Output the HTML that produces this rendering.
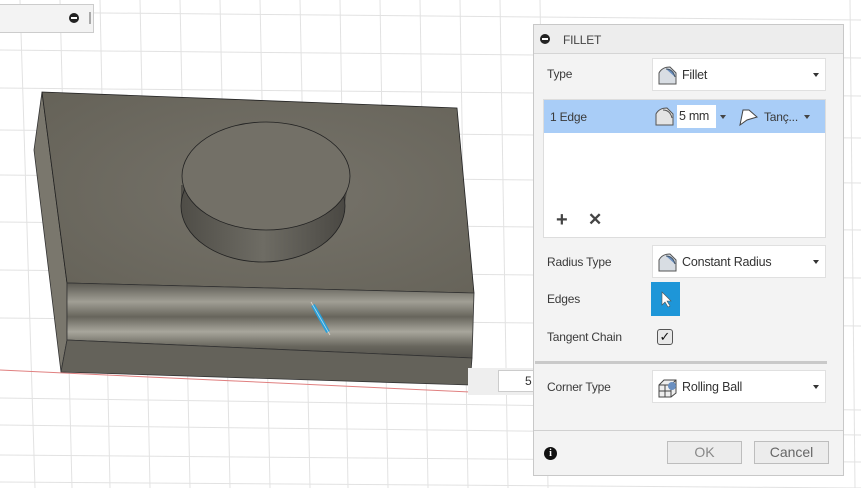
<!DOCTYPE html>
<html><head><meta charset="utf-8"><style>
*{margin:0;padding:0;box-sizing:border-box}
body{width:861px;height:488px;overflow:hidden;background:#fff;font-family:"Liberation Sans",sans-serif;font-size:12px;color:#333;position:relative}
.abs{position:absolute}
.dlg{left:533px;top:24px;width:311px;height:452px;background:#f3f3f3;border:1px solid #c8c8c8}
.lbl{position:absolute;font-size:12px;color:#3a3a3a;letter-spacing:-0.2px}
.dd{position:absolute;background:#fff;border:1px solid #e0e0e0;height:33px;left:118px;width:174px}
.dd .t{position:absolute;left:29px;top:9px;font-size:12.5px;color:#333;letter-spacing:-0.2px}
.dd .ar{position:absolute;right:6px;top:14px;width:0;height:0;border-left:3px solid transparent;border-right:3px solid transparent;border-top:4px solid #333}
.dd svg{position:absolute;left:3px;top:6px}
.btn{position:absolute;border:1px solid #bdbdbd;background:#ececec;height:23px;top:416px;text-align:center;line-height:21px;font-size:14px;color:#888}
</style></head><body>
<svg class="abs" style="left:0;top:0" width="861" height="488">
<g stroke="#e2e2e2" stroke-width="1" fill="none">
<path d="M0 12 L861 20"/><path d="M0 50 L861 58"/><path d="M0 88 L861 96"/><path d="M0 130 L861 138"/><path d="M0 175 L861 183"/><path d="M0 222 L861 230"/><path d="M0 270 L861 278"/><path d="M0 318 L861 326"/><path d="M0 398 L861 410"/><path d="M0 425 L861 435"/><path d="M0 455 L861 462"/><path d="M0 482 L861 488"/>
<path d="M20 0 L35 488"/><path d="M60 0 L72 488"/><path d="M100 0 L110 488"/><path d="M140 0 L150 488"/><path d="M180 0 L190 488"/><path d="M220 0 L230 488"/><path d="M260 0 L270 488"/><path d="M300 0 L310 488"/><path d="M340 0 L348 488"/><path d="M380 0 L388 488"/><path d="M420 0 L428 488"/><path d="M460 0 L468 488"/><path d="M500 0 L508 488"/><path d="M540 0 L548 488"/><path d="M850 0 L855 488"/>
</g>
<path d="M0 370 L470 392" stroke="#e08080" stroke-width="1"/>
<defs>
<radialGradient id="tf" cx="0.55" cy="0.5" r="0.7"><stop offset="0" stop-color="#76736a"/><stop offset="1" stop-color="#666359"/></radialGradient>
<linearGradient id="fl" x1="0" y1="0" x2="0" y2="1"><stop offset="0" stop-color="#5a5851"/><stop offset="0.25" stop-color="#a19f95"/><stop offset="0.45" stop-color="#67655c"/><stop offset="0.65" stop-color="#a8a69c"/><stop offset="0.85" stop-color="#67655c"/><stop offset="1" stop-color="#55534d"/></linearGradient>
<linearGradient id="cy" x1="0" y1="0" x2="1" y2="0"><stop offset="0" stop-color="#4f4d47"/><stop offset="0.5" stop-color="#6e6c64"/><stop offset="1" stop-color="#4a4843"/></linearGradient>
</defs>
<polygon points="42,92 34,150 61,372 67,340 67,283" fill="#7a776d" stroke="#333" stroke-width="0.8"/>
<polygon points="42,92 457,108 474,293 67,283" fill="url(#tf)" stroke="#222" stroke-width="0.8"/>
<polygon points="67,283 474,293 472,358 67,340" fill="url(#fl)" stroke="#333" stroke-width="0.8"/>
<polygon points="67,340 472,358 470,385 61,372" fill="#64625a" stroke="#333" stroke-width="0.8"/>
<path d="M181 185 L181 205 A82 57 0 0 0 343 215 L348 185 Z" fill="url(#cy)"/>
<ellipse cx="263" cy="206" rx="82" ry="56" fill="url(#cy)" stroke="#222" stroke-width="0.8"/>
<ellipse cx="266" cy="176" rx="84" ry="54" fill="#737067" stroke="#222" stroke-width="0.8"/>
<path d="M313 305 L328 332" stroke="#2a9fd8" stroke-width="4"/>
<path d="M311 302 L330 335" stroke="#fff" stroke-width="0.8" fill="none" opacity="0.6"/>
</svg>
<div class="abs" style="left:0;top:4px;width:94px;height:29px;background:#f3f3f3;border:1px solid #ccc;border-left:none"></div>
<div class="abs" style="left:69px;top:13px;width:10px;height:10px;border-radius:50%;background:#222"><div style="position:absolute;left:2px;top:4px;width:6px;height:2px;background:#fff"></div></div>
<div class="abs" style="left:89px;top:12px;width:2px;height:12px;background:#aaa"></div>
<div class="abs" style="left:468px;top:368px;width:66px;height:27px;background:#eee"></div>
<div class="abs" style="left:498px;top:370px;width:36px;height:22px;background:#fff;border:1px solid #ccc;font-size:12px;padding:3px 0 0 26px">5</div>
<div class="abs dlg">
 <div class="abs" style="left:0;top:0;width:309px;height:29px;background:#ededed;border-bottom:1px solid #d5d5d5"></div>
 <div class="abs" style="left:6px;top:9px;width:10px;height:10px;border-radius:50%;background:#222"><div style="position:absolute;left:2px;top:4px;width:6px;height:2px;background:#fff"></div></div>
 <div class="lbl" style="left:29px;top:8px;color:#444">FILLET</div>
 <div class="lbl" style="left:13px;top:42px">Type</div>
 <div class="dd" style="top:33px"><svg width="24" height="22"><path d="M3 19 L3 8 Q6 2 14 2 L20 8 L20 19 Z" fill="#d8dde3" stroke="#555"/><path d="M10 4 Q17 4 19 12" fill="#6a8fc0" stroke="#456"/></svg><span class="t">Fillet</span><span class="ar"></span></div>
 <div class="abs" style="left:9px;top:74px;width:283px;height:139px;background:#fff;border:1px solid #ddd"></div>
 <div class="abs" style="left:10px;top:75px;width:281px;height:33px;background:#a9cdf7"></div>
 <div class="lbl" style="left:16px;top:85px">1 Edge</div>
 <svg class="abs" style="left:119px;top:81px" width="24" height="22"><path d="M3 19 L3 8 Q6 2 14 2 L20 8 L20 19 Z" fill="#e4e4e4" stroke="#555"/><path d="M10 4 Q17 4 19 12" fill="none" stroke="#555"/></svg>
 <div class="abs" style="left:143px;top:80px;width:39px;height:23px;background:#fff;font-size:12.5px;padding:4px 0 0 2px;letter-spacing:-0.3px">5 mm</div>
 <div class="abs" style="left:186px;top:90px;border-left:3px solid transparent;border-right:3px solid transparent;border-top:4px solid #444"></div>
 <svg class="abs" style="left:203px;top:81px" width="22" height="22"><path d="M3 19 L6 4 L12 4 L20 11 L10 14 Z" fill="#fff" stroke="#444"/></svg>
 <div class="lbl" style="left:230px;top:85px;font-size:12px">Tanç...</div>
 <div class="abs" style="left:270px;top:90px;border-left:3px solid transparent;border-right:3px solid transparent;border-top:4px solid #444"></div>
 <div class="lbl" style="left:22px;top:184px;font-size:20px;font-weight:bold;color:#444">+</div>
 <div class="lbl" style="left:54px;top:185px;font-size:17px;font-weight:bold;color:#444">✕</div>
 <div class="lbl" style="left:13px;top:230px">Radius Type</div>
 <div class="dd" style="top:220px"><svg width="24" height="22"><path d="M3 19 L3 8 Q6 2 14 2 L20 8 L20 19 Z" fill="#d8dde3" stroke="#555"/><path d="M10 4 Q17 4 19 12" fill="#6a8fc0" stroke="#456"/></svg><span class="t">Constant Radius</span><span class="ar"></span></div>
 <div class="lbl" style="left:13px;top:267px">Edges</div>
 <div class="abs" style="left:117px;top:257px;width:29px;height:34px;background:#1e96d8"><svg width="29" height="34"><path d="M11 10 L11 23 L14 20 L17 25 L19 24 L16 19 L20 19 Z" fill="#fff" stroke="#555" stroke-width="0.6"/></svg></div>
 <div class="lbl" style="left:13px;top:305px">Tangent Chain</div>
 <div class="abs" style="left:123px;top:304px;width:16px;height:16px;border:1px solid #555;border-radius:3px;background:#e8e8e8;font-size:13px;line-height:14px;text-align:center;color:#111">✓</div>
 <div class="abs" style="left:1px;top:336px;width:292px;height:3px;background:#c9c9c9"></div>
 <div class="lbl" style="left:13px;top:355px">Corner Type</div>
 <div class="dd" style="top:345px"><svg width="24" height="22"><path d="M3 8 L8 3 L20 3 L20 16 L15 20 L3 20 Z M3 8 L15 8 L15 20 M15 8 L20 3 M3 14 L15 14 M9 8 L9 20" fill="#eee" stroke="#444"/><circle cx="16" cy="9" r="4" fill="#6a8fc0"/></svg><span class="t">Rolling Ball</span><span class="ar"></span></div>
 <div class="abs" style="left:0;top:405px;width:309px;height:1px;background:#d0d0d0"></div>
 <div class="abs" style="left:10px;top:422px;width:13px;height:13px;border-radius:50%;background:#111;color:#fff;font-size:10px;font-weight:bold;text-align:center;line-height:13px;font-family:'Liberation Serif',serif">i</div>
 <div class="btn" style="left:133px;width:75px">OK</div>
 <div class="btn" style="left:220px;width:75px;color:#666">Cancel</div>
</div>
</body></html>
